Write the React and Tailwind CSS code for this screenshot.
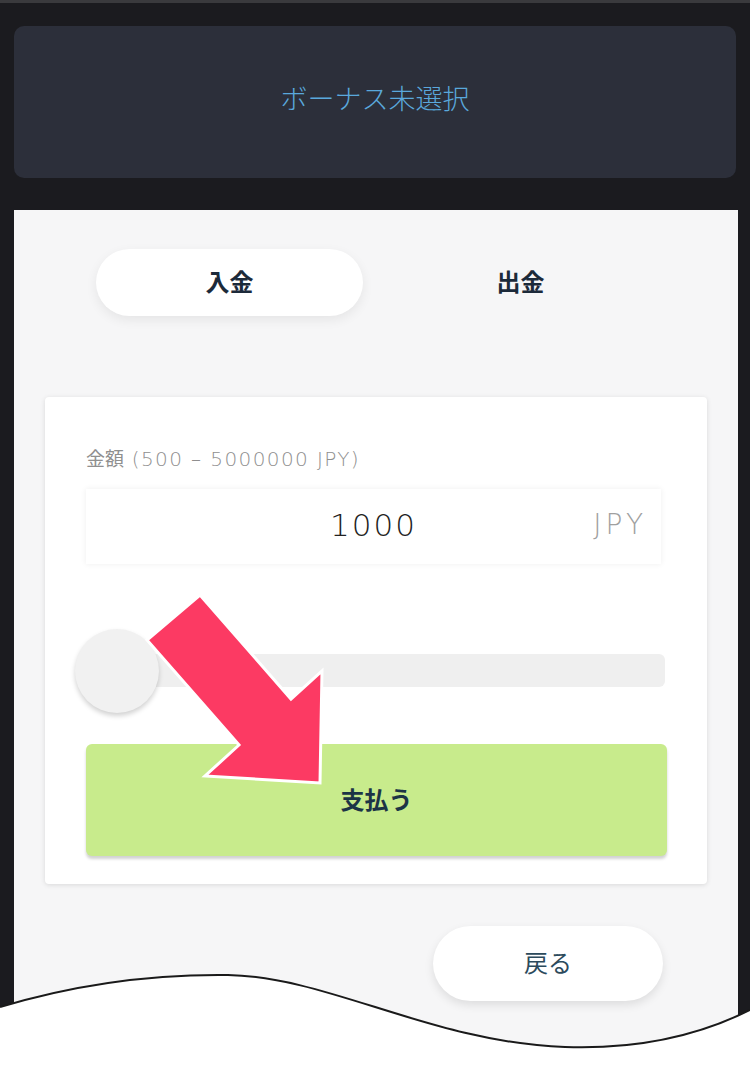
import React from "react";

const jp = { fontFamily: '"Noto Sans CJK JP", "Noto Sans", sans-serif' };
const latin = { fontFamily: '"DejaVu Sans", "Noto Sans CJK JP", sans-serif' };

function Header() {
  return (
    <div className="mx-[14px] mt-[23px] h-[152px] rounded-[10px] bg-[#2c2f3a] flex items-center justify-center pb-[7px]">
      <span className="text-[27px] font-light text-[#5aa8dc]" style={jp}>
        ボーナス未選択
      </span>
    </div>
  );
}

function Tabs() {
  return (
    <div className="flex pl-[82px]">
      <div className="w-[267px] h-[67px] rounded-full bg-white shadow-[0_4px_12px_rgba(0,0,0,0.07)] flex items-center justify-center pb-[3px]">
        <span className="text-[24px] font-bold text-[#1c2a3a]" style={jp}>入金</span>
      </div>
      <div className="ml-[24px] w-[267px] h-[67px] flex items-center justify-center pb-[3px]">
        <span className="text-[24px] font-bold text-[#1c2a3a]" style={jp}>出金</span>
      </div>
    </div>
  );
}

function AmountSlider() {
  return (
    <div className="relative mt-[65px] h-[84px]">
      <div className="absolute left-[64px] right-[2px] top-[25px] h-[33px] rounded-md bg-[#efefef]" />
      <div className="absolute left-[-11px] top-0 w-[84px] h-[84px] rounded-full bg-[#f1f1f1] shadow-[0_3px_5px_rgba(0,0,0,0.18)]" />
    </div>
  );
}

function DepositCard() {
  return (
    <div className="mx-[31px] mt-[81px] rounded-[4px] bg-white pl-[41px] pr-[40px] pt-[48px] pb-[28px] shadow-[0_1px_5px_rgba(0,0,0,0.12)]">
      <div className="text-[20px] leading-[25px] font-extralight text-[#8f8f8f] tracking-[1.4px]" style={latin}>
        <span className="font-normal tracking-normal text-[19px]" style={jp}>金額</span> (500 – 5000000 JPY)
      </div>
      <div className="mt-[17px] mr-[6px] h-[75px] bg-white shadow-[0_0_6px_rgba(0,0,0,0.07)] flex items-center relative">
        <span className="w-full text-center text-[31px] font-extralight text-[#222] tracking-[2px] pb-[3px]" style={latin}>1000</span>
        <span className="absolute right-[14px] text-[28px] font-extralight text-[#a0a0a0] tracking-[4px] pb-[3px]" style={latin}>JPY</span>
      </div>
      <AmountSlider />
      <button className="mt-[31px] w-full h-[112px] rounded-[6px] bg-[#c8eb8c] shadow-[0_3px_3px_rgba(0,0,0,0.18)] flex items-center justify-center pb-[2px]">
        <span className="text-[24px] font-bold text-[#1c3446]" style={jp}>支払う</span>
      </button>
    </div>
  );
}

export default function App() {
  return (
    <div className="relative w-[750px] h-[1084px] overflow-hidden bg-[#1b1b1f] border-t-[3px] border-[#3a3a3d]">
      <Header />
      <div className="mt-[32px] ml-[14px] mr-[12px] h-[900px] bg-[#f6f6f7] pt-[39px]">
        <Tabs />
        <DepositCard />
        <div className="flex justify-end pr-[75px] mt-[42px]">
          <button className="w-[230px] h-[75px] rounded-full bg-white shadow-[0_4px_10px_rgba(0,0,0,0.1)] flex items-center justify-center pb-[4px]">
            <span className="text-[24px] text-[#2c4a5c]" style={jp}>戻る</span>
          </button>
        </div>
      </div>

      {/* pointer arrow */}
      <svg className="absolute inset-0 pointer-events-none" width="750" height="1084" viewBox="0 0 750 1084">
        <polygon
          points="200,592 147,637 239,742 205,773 320,780 322,668 291,696"
          fill="#fc3a63"
          stroke="#ffffff"
          strokeWidth="3"
          strokeLinejoin="miter"
        />
      </svg>

      {/* torn bottom edge */}
      <svg className="absolute left-0 bottom-0 pointer-events-none" width="750" height="120" viewBox="0 964 750 120">
        <path
          d="M0,1007 C70,986 150,974 228,975 C330,977 430,1042 565,1047 C650,1050 710,1030 750,1010 L750,1084 L0,1084 Z"
          fill="#ffffff"
        />
        <path
          d="M0,1007 C70,986 150,974 228,975 C330,977 430,1042 565,1047 C650,1050 710,1030 750,1010"
          fill="none"
          stroke="#1a1a1a"
          strokeWidth="2"
        />
      </svg>
    </div>
  );
}
